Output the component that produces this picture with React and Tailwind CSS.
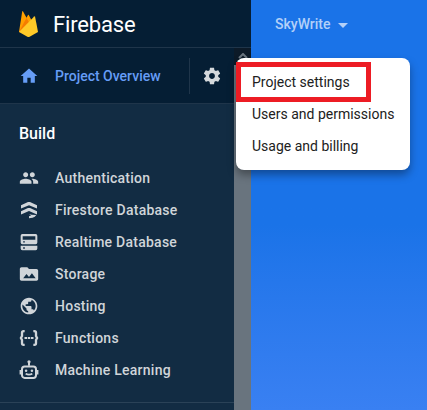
const P = {
  auth: "M16 11c1.66 0 2.99-1.34 2.99-3S17.66 5 16 5s-3 1.34-3 3 1.34 3 3 3zm-8 0c1.66 0 2.99-1.34 2.99-3S9.66 5 8 5 5 6.34 5 8s1.34 3 3 3zm0 2c-2.33 0-7 1.17-7 3.5V19h14v-2.5c0-2.33-4.67-3.5-7-3.5zm8 0c-.29 0-.62.02-.97.05 1.16.84 1.97 1.97 1.97 3.45V19h6v-2.5c0-2.33-4.67-3.5-7-3.5z",
  firestore: "M2.400 6.400 10.800 2.500q1.200-.5 2.400 0L21.600 6.400v3.800L12 6.200 2.400 10.200zM2.400 13.600 10.800 9.700q1.200-.5 2.400 0L21.600 13.600v3.700L12 13.300 2.400 17.300zM12 16.800l3 .8 5.800.4q-1.500 2.600-4.500 3.200L12 22v-2.500l2.500-.9z",
  database: "M4 2.400h16q2 0 2 2v8.200q0 2-2 2H4q-2 0-2-2V4.400q0-2 2-2zM4.400 5.200v4h15.200v-4zM5 11.200v1.500h2v-1.500zM2 16.600h20v3.200q0 2-2 2H4q-2 0-2-2zM5 18.400v1.600h2v-1.600z",
  storage: "M20 6h-8l-2-2H3c-1.100 0-2 .9-2 2v12c0 1.100.9 2 2 2h18c1.100 0 2-.9 2-2V8c0-1.100-.9-2-2-2zM5 17l4-5 3 3.500L15.500 11l4.500 6z",
  hosting: "M12 2C6.480 2 2 6.480 2 12s4.480 10 10 10 10-4.480 10-10S17.520 2 12 2zm-1 17.930c-3.950-.49-7-3.850-7-7.930 0-.62.08-1.210.21-1.790L9 15v1c0 1.100.9 2 2 2v1.930zm6.900-2.540c-.26-.81-1-1.390-1.900-1.390h-1v-3c0-.55-.45-1-1-1H8v-2h2c.55 0 1-.45 1-1V7h2c1.100 0 2-.9 2-2v-.41c2.930 1.190 5 4.060 5 7.410 0 2.080-.8 3.970-2.100 5.390z",
  home: "M10 20v-6h4v6h5v-8h3L12 3 2 12h3v8z",
  gear: "M19.430 12.980c.04-.32.07-.64.07-.98s-.03-.66-.07-.98l2.110-1.650c.19-.15.24-.42.12-.64l-2-3.460c-.12-.22-.39-.3-.61-.22l-2.490 1c-.52-.4-1.080-.73-1.690-.98l-.38-2.650C14.460 2.180 14.250 2 14 2h-4c-.25 0-.46.18-.49.42l-.38 2.650c-.61.25-1.170.59-1.690.98l-2.490-1c-.23-.09-.49 0-.61.22l-2 3.460c-.13.22-.07.49.12.64l2.110 1.650c-.04.32-.07.65-.07.98s.03.66.07.98l-2.110 1.650c-.19.15-.24.42-.12.64l2 3.460c.12.22.39.3.61.22l2.490-1c.52.4 1.080.73 1.690.98l.38 2.650c.03.24.24.42.49.42h4c.25 0 .46-.18.49-.42l.38-2.650c.61-.25 1.170-.59 1.690-.98l2.490 1c.23.09.49 0 .61-.22l2-3.460c.12-.22.07-.49-.12-.64l-2.110-1.650zM12 15.500c-1.930 0-3.500-1.570-3.500-3.500s1.570-3.500 3.500-3.500 3.500 1.570 3.500 3.500-1.570 3.500-3.500 3.500z",
};

function Icon({ d, className = "" }) {
  return (
    <svg viewBox="0 0 24 24" fill="currentColor" fillRule="evenodd" className={"size-5 shrink-0 " + className}>
      <path d={d} />
    </svg>
  );
}

function FunctionsIcon() {
  return (
    <svg viewBox="0 0 24 24" fill="none" stroke="currentColor" strokeWidth="2.8" className="size-5 shrink-0">
      <path d="M6.800 3.800H5.500Q3.600 3.800 3.600 5.700V9.500L2.300 12l1.300 2.500v3.800Q3.600 20.200 5.500 20.200h1.300M17.200 3.800h1.300q1.900 0 1.900 1.900V9.500l1.300 2.500-1.300 2.500v3.800q0 1.900-1.900 1.900h-1.300" />
      <path strokeWidth="2.400" d="M6.600 12h3M10.500 12h3M14.400 12h3" />
    </svg>
  );
}

function RobotIcon() {
  return (
    <svg viewBox="0 0 24 24" fill="none" stroke="currentColor" strokeWidth="2.400" className="size-5 shrink-0">
      <rect x="3.600" y="7.800" width="16.800" height="13.700" rx="3.200" />
      <path d="M12 7V3M1.900 12v5.500M22.100 12v5.500" />
      <circle cx="12" cy="2.200" r="1.900" fill="currentColor" stroke="none" />
      <circle cx="8.500" cy="12.800" r="1.500" fill="currentColor" stroke="none" />
      <circle cx="15.500" cy="12.800" r="1.500" fill="currentColor" stroke="none" />
      <path strokeWidth="2" d="M8 16.600q4 2 8 0" />
    </svg>
  );
}

function FirebaseLogo() {
  return (
    <svg viewBox="0 0 19 26" className="h-[26px] w-[19px] shrink-0">
      <path fill="#ffa000" d="M0 21 3.200.6q.3-.9.900-.1L7.500 6.800 9 4q.4-.6.800 0L18 20z" />
      <path fill="#f57c00" d="M0 21 7.500 6.800 10.800 13z" />
      <path fill="#ffca28" d="m0 21 15.200-15.500q.7-.5.900.3L19 21l-8.400 4.700q-1.100.6-2.200 0z" />
    </svg>
  );
}

const items = [
  ["Authentication", <Icon d={P.auth} />],
  ["Firestore Database", <Icon d={P.firestore} />],
  ["Realtime Database", <Icon d={P.database} />],
  ["Storage", <Icon d={P.storage} />],
  ["Hosting", <Icon d={P.hosting} />],
  ["Functions", <FunctionsIcon />],
  ["Machine Learning", <RobotIcon />],
];

export default function App() {
  return (
    <div className="relative flex h-[410px] w-[427px] overflow-hidden bg-[#1a73e8] font-['Roboto',sans-serif] text-sm">
      <aside className="flex w-[251px] shrink-0 flex-col bg-[#051e34]">
        <header className="flex h-12 shrink-0 items-center gap-4 border-b border-[#1f354a] pl-[19px] text-white">
          <FirebaseLogo />
          <span className="-ml-px pt-0.5 text-[22px] leading-6 tracking-[-0.15px]">Firebase</span>
        </header>
        <div className="flex min-h-0 flex-1">
          <div className="flex w-[234px] flex-col bg-[#122c43]">
            <div className="flex h-14 shrink-0 items-center border-b border-[#1f354a] bg-[#051e34] pl-[19px] font-medium text-[#669df6]">
              <Icon d={P.home} />
              <span className="ml-4 w-[134px]">Project Overview</span>
              <span className="h-9 w-px bg-[#1f354a]" />
              <Icon d={P.gear} className="ml-3 text-[#d5d9dc]" />
            </div>
            <h2 className="mt-[18px] ml-[19px] text-base leading-6 font-medium text-white">Build</h2>
            <nav className="mt-4 h-[241px] shrink-0 border-b border-[#2a4257] pl-[19px] font-medium tracking-[0.25px] text-[#d0d5d9]">
              {items.map(([label, icon]) => (
                <div key={label} className="flex h-8 items-center gap-4">
                  {icon}
                  <span>{label}</span>
                </div>
              ))}
            </nav>
          </div>
          <div className="w-[17px] bg-[#69747e]">
            <div className="flex h-[17px] justify-center bg-[#0c1a28] pt-[5px]">
              <svg viewBox="0 0 10 6" className="h-1.5 w-2.5" fill="none" stroke="#69747e" strokeWidth="2">
                <path d="m1 5 4-4 4 4" />
              </svg>
            </div>
          </div>
        </div>
      </aside>
      <main className="flex-1 bg-linear-to-b from-[#1a73e8] from-55% to-[#3980f2] pt-[14px] pl-6">
        <div className="flex h-5 items-center gap-2 font-medium text-[#b3d0f8]">
          <span>SkyWrite</span>
          <svg viewBox="0 0 10 5" className="mt-0.5 -ml-px h-[5px] w-2.5" fill="currentColor">
            <path d="M0 0h10L5 5z" />
          </svg>
        </div>
      </main>
      <div className="absolute top-[58px] left-[236px] h-[112px] w-[174px] rounded-lg bg-white py-2 pl-4 text-[#212121] shadow-[0_5px_8px_rgba(0,0,0,0.35)]">
        <div className="flex h-8 items-center">Project settings</div>
        <div className="flex h-8 items-center">Users and permissions</div>
        <div className="flex h-8 items-center">Usage and billing</div>
      </div>
      <div className="absolute top-[62px] left-[236px] h-10 w-[135px] border-5 border-[#ed1c24]" />
    </div>
  );
}
